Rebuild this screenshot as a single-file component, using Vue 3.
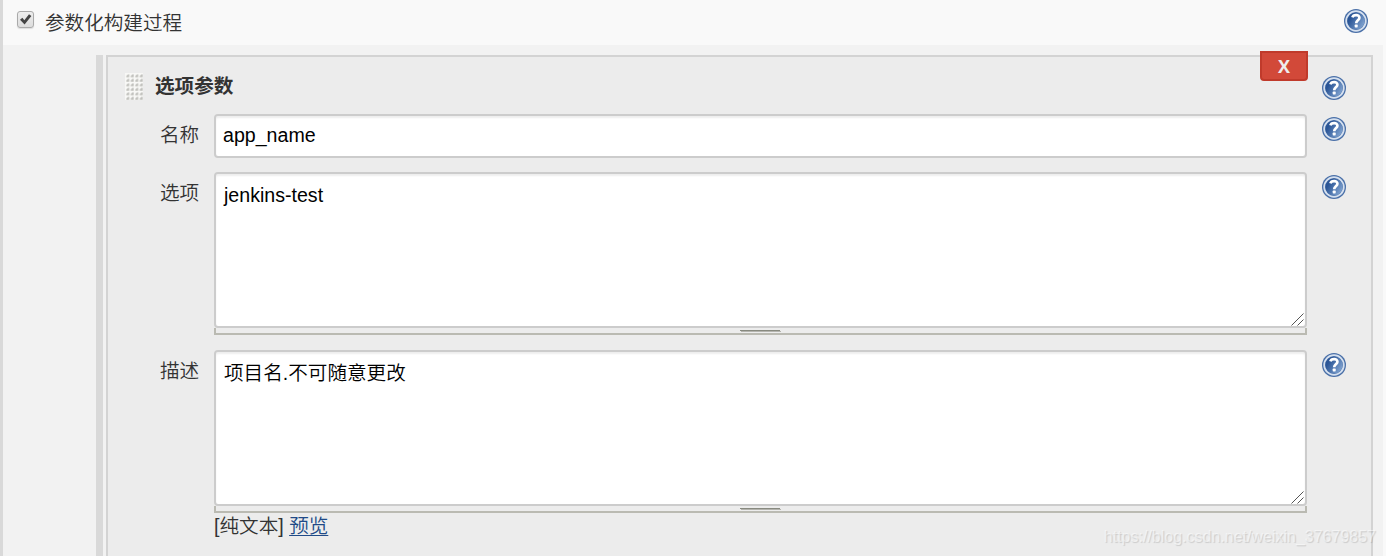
<template>
  <div class="config">
    <div class="option-row">
      <label class="option-label">
        <span class="checkbox">
          <svg viewBox="0 0 17 17" width="17" height="17">
            <path d="M3 8.8 L5.4 6.8 L7.3 9.2 L12 3.2 L14.4 5 L7.6 13.6 Z" fill="#444" />
          </svg>
        </span>
        <span>参数化构建过程</span>
      </label>
      <span class="help"><svg viewBox="0 0 24 24"><use href="#help-icon" /></svg></span>
    </div>

    <div class="nested">
      <div class="group-bar"></div>
      <div class="panel">
        <button class="delete-btn" type="button">X</button>

        <div class="panel-header">
          <svg class="drag-handle" width="18" height="27" viewBox="0 0 18 27">
            <defs>
              <pattern id="dots" width="4.5" height="4.5" patternUnits="userSpaceOnUse">
                <rect width="4.5" height="4.5" fill="#f8f8f6" />
                <path d="M1.3 3 L3 1.3 H4.2 V4.2 H1.3 Z" fill="#c0c0bc" />
              </pattern>
            </defs>
            <rect width="18" height="27" fill="url(#dots)" />
          </svg>
          <b class="panel-title">选项参数</b>
          <span class="help"><svg viewBox="0 0 24 24"><use href="#help-icon" /></svg></span>
        </div>

        <div v-for="field in fields" :key="field.label" class="field" :class="field.type">
          <div class="field-label">{{ field.label }}</div>
          <div class="field-main">
            <input v-if="field.type === 'text'" v-model="field.value" class="control" type="text" />
            <template v-else>
              <div class="area-wrap">
                <textarea v-model="field.value" class="control area" spellcheck="false"></textarea>
                <svg class="grip" width="13" height="13" viewBox="0 0 13 13">
                  <path d="M0.5 12.5 L12.5 0.5 M6.5 12.5 L12.5 6.5" stroke="#555" stroke-width="1" />
                </svg>
              </div>
              <div class="resizer"><span></span></div>
            </template>
            <div v-if="field.preview" class="preview">[纯文本] <a href="#">预览</a></div>
          </div>
          <span class="help"><svg viewBox="0 0 24 24"><use href="#help-icon" /></svg></span>
        </div>
      </div>
    </div>

    <div class="watermark">https://blog.csdn.net/weixin_37679857</div>

    <svg class="sprite" width="0" height="0">
      <defs>
        <linearGradient id="help-fill" x1="0" y1="0.2" x2="1" y2="0.8">
          <stop offset="0.2" stop-color="#2a5596" />
          <stop offset="1" stop-color="#86a8d4" />
        </linearGradient>
        <symbol id="help-icon" viewBox="0 0 24 24">
          <circle cx="12" cy="12" r="12" fill="#4a70a8" />
          <circle cx="12" cy="12" r="9.8" fill="none" stroke="#d5e0ef" stroke-width="1.8" />
          <circle cx="12" cy="12" r="8.6" fill="url(#help-fill)" />
          <path
            d="M8.4 8.4 C9.2 5.2 15.6 5.2 15.4 8.8 C15.2 11.2 12.2 11.4 12.2 14.2"
            fill="none"
            stroke="#fff"
            stroke-width="2.7"
          />
          <rect x="10.7" y="15.6" width="3" height="2.8" rx="0.6" fill="#fff" />
        </symbol>
      </defs>
    </svg>
  </div>
</template>

<script setup>
import { ref } from 'vue'

const fields = ref([
  { label: '名称', type: 'text', value: 'app_name' },
  { label: '选项', type: 'textarea', value: 'jenkins-test' },
  { label: '描述', type: 'textarea', value: '项目名.不可随意更改', preview: true }
])
</script>

<style>
body {
  margin: 0;
  background: #f9f9f9;
}
</style>

<style scoped>
.config {
  position: relative;
  box-sizing: border-box;
  width: 1383px;
  height: 556px;
  overflow: hidden;
  border-left: 3px solid #d9d9d9;
  background: #f2f2f2;
  color: #333;
  font-family: "Liberation Sans", "Noto Sans CJK SC", sans-serif;
  font-size: 19.6px;
  font-weight: 350;
  line-height: 28px;
}

.option-row {
  display: flex;
  align-items: flex-start;
  justify-content: space-between;
  box-sizing: border-box;
  height: 45px;
  padding: 9px 15px 0 14px;
  background: #f9f9f9;
}

.option-label {
  display: flex;
  gap: 11px;
}

.checkbox {
  box-sizing: border-box;
  width: 17px;
  height: 17px;
  margin-top: 2px;
  border: 1px solid #aaa;
  border-radius: 3px;
  background: linear-gradient(#eee, #ddd);
  box-shadow: 0 1px 1px #ddd;
}

.checkbox svg {
  display: block;
  margin: -1px;
}

.help {
  flex: none;
  width: 24px;
  height: 24px;
}

.help svg {
  display: block;
  width: 24px;
  height: 24px;
}

.nested {
  display: flex;
  gap: 3px;
  height: 520px;
  padding: 10px 10px 0 93px;
}

.group-bar {
  width: 7px;
  background: #d9d9d9;
}

.panel {
  position: relative;
  flex: 1;
  box-sizing: border-box;
  padding: 16px 25px 0 17px;
  border: 2px solid #d3d3d3;
  background: #ececec;
}

.delete-btn {
  position: absolute;
  top: -6px;
  right: 63px;
  box-sizing: border-box;
  width: 48px;
  height: 30px;
  padding: 0;
  border: 2px solid #c03a2b;
  border-radius: 0 0 4px 4px;
  background: #d24939;
  color: #eee;
  font: bold 18px/24px "Open Sans", sans-serif;
}

.panel-header {
  display: flex;
  height: 41px;
}

.panel-title {
  flex: 1;
  margin-left: 12px;
  font-weight: 700;
  line-height: 26px;
}

.panel-header .help {
  margin-top: 3px;
}

.field {
  display: flex;
  margin-bottom: 14px;
}

.field.textarea {
  margin-bottom: 15px;
}

.field-label {
  width: 89px;
  padding-left: 35px;
  box-sizing: border-box;
  line-height: 43px;
}

.field-main {
  flex: 1;
  margin-right: 15px;
}

.field .help {
  margin-top: 3px;
}

.control {
  display: block;
  box-sizing: border-box;
  width: 100%;
  height: 44px;
  margin: 0;
  padding: 0 7px 2px;
  border: 2px solid #ccc;
  border-radius: 4px;
  outline: none;
  background: #fff;
  box-shadow: inset 0 2px 2px #eee;
  color: #000;
  font: inherit;
}

.area-wrap {
  position: relative;
}

.area {
  height: 156px;
  padding: 7px 8px;
  resize: none;
}

.grip {
  position: absolute;
  right: 3px;
  bottom: 2px;
}

.resizer {
  display: flex;
  justify-content: center;
  box-sizing: border-box;
  height: 7px;
  border: 2px solid #babab2;
  border-top: 0;
}

.resizer span {
  width: 40px;
  height: 1px;
  margin: 2px 1px 0 0;
  background: #888a80;
  box-shadow: 1px 1px 0 #b4b4ae;
}

.preview {
  line-height: 27px;
}

.preview a {
  color: #204a87;
  text-underline-offset: 2px;
}

.watermark {
  position: absolute;
  right: 7px;
  bottom: 7px;
  color: rgba(255, 255, 255, 0.5);
  font-size: 16px;
  font-weight: 400;
  line-height: 24px;
  text-shadow: 1px 1px 1px rgba(0, 0, 0, 0.14);
  white-space: nowrap;
}

.sprite {
  position: absolute;
}
</style>
